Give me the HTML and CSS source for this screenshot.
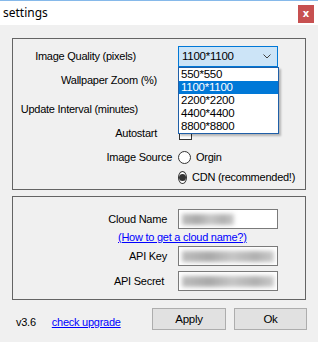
FILE: index.html
```html
<!DOCTYPE html>
<html lang="en">
<head>
    <meta charset="UTF-8">
    <meta name="viewport" content="width=device-width, initial-scale=1.0">
    <title>settings</title>
    <link rel="stylesheet" href="styles.css">
</head>
<body>
    <div class="window">
        <div class="titlebar">
            <span class="title">settings</span>
            <span class="close">x</span>
        </div>

        <div class="group group-main">
            <div class="row row-quality">
                <span class="label">Image Quality (pixels)</span>
                <div class="combo">
                    <span class="combo-value">1100*1100</span>
                    <svg class="chevron" width="8" height="5" viewBox="0 0 8 5">
                        <path d="M0.5 0.5 L4 4 L7.5 0.5" fill="none" stroke="#404040" stroke-width="1"/>
                    </svg>
                    <ul class="combo-list">
                        <li>550*550</li>
                        <li class="selected">1100*1100</li>
                        <li>2200*2200</li>
                        <li>4400*4400</li>
                        <li>8800*8800</li>
                    </ul>
                </div>
            </div>
            <div class="row row-zoom">
                <span class="label">Wallpaper Zoom (%)</span>
                <span class="spin"></span>
            </div>
            <div class="row row-interval">
                <span class="label">Update Interval (minutes)</span>
                <span class="spin"></span>
            </div>
            <div class="row row-autostart">
                <span class="label">Autostart</span>
                <span class="checkbox"></span>
            </div>
            <div class="row row-source">
                <span class="label">Image Source</span>
                <span class="radio-item"><span class="radio"></span>Orgin</span>
            </div>
            <div class="row row-cdn">
                <span class="label"></span>
                <span class="radio-item"><span class="radio checked"></span>CDN (recommended!)</span>
            </div>
        </div>

        <div class="group group-cloud">
            <div class="row">
                <span class="label">Cloud Name</span>
                <span class="textbox"><span class="blur blur-short"></span></span>
            </div>
            <div class="link-row">
                <a href="#" class="link">(How to get a cloud name?)</a>
            </div>
            <div class="row">
                <span class="label">API Key</span>
                <span class="textbox"><span class="blur"></span></span>
            </div>
            <div class="row">
                <span class="label label-secret">API Secret</span>
                <span class="textbox"><span class="blur"></span></span>
            </div>
        </div>

        <div class="footer">
            <span class="version">v3.6</span>
            <a href="#" class="link">check upgrade</a>
            <button class="btn btn-apply">Apply</button>
            <button class="btn">Ok</button>
        </div>
    </div>
</body>
</html>
```

FILE: styles.css
```css
body {
    margin: 0;
    font-family: "Liberation Sans", Arial, sans-serif;
    font-size: 11px;
    letter-spacing: -0.25px;
    color: #000;
    background-color: #f0f0f0;
}
.window {
    width: 318px;
    height: 342px;
    background-color: #f0f0f0;
    overflow: hidden;
}
.titlebar {
    height: 24px;
    border-top: 1px solid #86b9ea;
    background-color: #fff;
    display: flex;
    align-items: center;
    justify-content: space-between;
    padding: 0 4px 0 3px;
    margin-bottom: 13px;
}
.title {
    font-family: "Noto Sans", sans-serif;
    font-size: 12px;
    letter-spacing: 0;
    margin-top: -1px;
}
.close {
    width: 16px;
    height: 18px;
    margin-top: 1px;
    background-color: #c75050;
    color: #fff;
    font-family: "DejaVu Sans", sans-serif;
    font-weight: bold;
    font-size: 10px;
    letter-spacing: 0;
    line-height: 17px;
    text-align: center;
}

.group {
    margin: 0 12px;
    border: 1px solid #646464;
}
.group-main {
    padding: 5px 0 4px;
}
.group-cloud {
    margin-top: 6px;
    padding: 12px 0 8px;
}

.row {
    display: grid;
    grid-template-columns: 165px 100px;
    align-items: center;
    height: 24px;
}
.label {
    justify-self: end;
    white-space: nowrap;
}
.row-quality .label { padding-right: 42px; }
.row-zoom .label { padding-right: 21px; }
.row-interval { margin-top: 5px; }
.row-interval .label { padding-right: 40px; }
.row-autostart .label { padding-right: 21px; }
.row-source .label { padding-right: 6px; }
.row-cdn { height: 16px; }

.combo {
    position: relative;
    height: 19px;
    border: 1px solid #0078d7;
    background-color: #cce4f7;
    display: flex;
    align-items: center;
    justify-content: space-between;
    padding: 0 6px 0 3px;
    font-size: 11.5px;
}
.chevron {
    margin-top: 1px;
}
.combo-list {
    position: absolute;
    top: 20px;
    left: -1px;
    width: 99px;
    margin: 0;
    padding: 0;
    list-style: none;
    background-color: #fff;
    border: 1px solid #1f5fa8;
    box-shadow: 2px 2px 2px rgba(0, 0, 0, 0.25);
    z-index: 2;
}
.combo-list li {
    height: 13px;
    line-height: 13px;
    padding-left: 2px;
    font-size: 11.5px;
}
.combo-list .selected {
    background-color: #0078d7;
    color: #fff;
}

.spin {
    width: 60px;
    height: 18px;
    border: 1px solid #7a7a7a;
    background-color: #fff;
}
.checkbox {
    width: 11px;
    height: 11px;
    border: 1px solid #333;
    background-color: #fff;
    margin-left: 1px;
}
.radio-item {
    display: flex;
    align-items: center;
    gap: 5px;
    white-space: nowrap;
}
.radio {
    width: 11px;
    height: 11px;
    border: 1px solid #333;
    border-radius: 50%;
    background-color: #fff;
    display: flex;
    align-items: center;
    justify-content: center;
}
.radio.checked::after {
    content: "";
    width: 7px;
    height: 7px;
    border-radius: 50%;
    background-color: #333;
}

.group-cloud .row {
    height: 20px;
    grid-template-columns: 165px 100px;
}
.group-cloud .row + .row {
    margin-top: 5px;
}
.group-cloud .label {
    padding-right: 11px;
}
.group-cloud .label-secret {
    padding-right: 14px;
}
.textbox {
    height: 18px;
    border: 1px solid #7a7a7a;
    background-color: #fff;
    display: flex;
    align-items: center;
    padding: 0 3px;
    overflow: hidden;
}
.blur {
    display: block;
    height: 11px;
    width: 92px;
    background: linear-gradient(90deg, #bdbdbd, #a9a9a9 30%, #c6c6c6 55%, #b0b0b0 80%, #cacaca);
    filter: blur(2px);
}
.blur-short {
    width: 52px;
}
.link-row {
    height: 17px;
    line-height: 17px;
    padding-left: 105px;
}
.link {
    color: #0000ff;
    text-decoration: underline;
}

.footer {
    display: flex;
    align-items: center;
    padding: 8px 11px 0 16px;
}
.version {
    margin-right: 16px;
    margin-top: 6px;
}
.footer .link {
    margin-top: 6px;
}
.btn {
    width: 73px;
    height: 22px;
    border: 1px solid #adadad;
    background-color: #e1e1e1;
    font-family: "Liberation Sans", Arial, sans-serif;
    font-size: 11.5px;
    letter-spacing: -0.25px;
    color: #000;
    padding: 0;
}
.btn-apply {
    width: 74px;
    margin-left: auto;
    margin-right: 8px;
}
```
